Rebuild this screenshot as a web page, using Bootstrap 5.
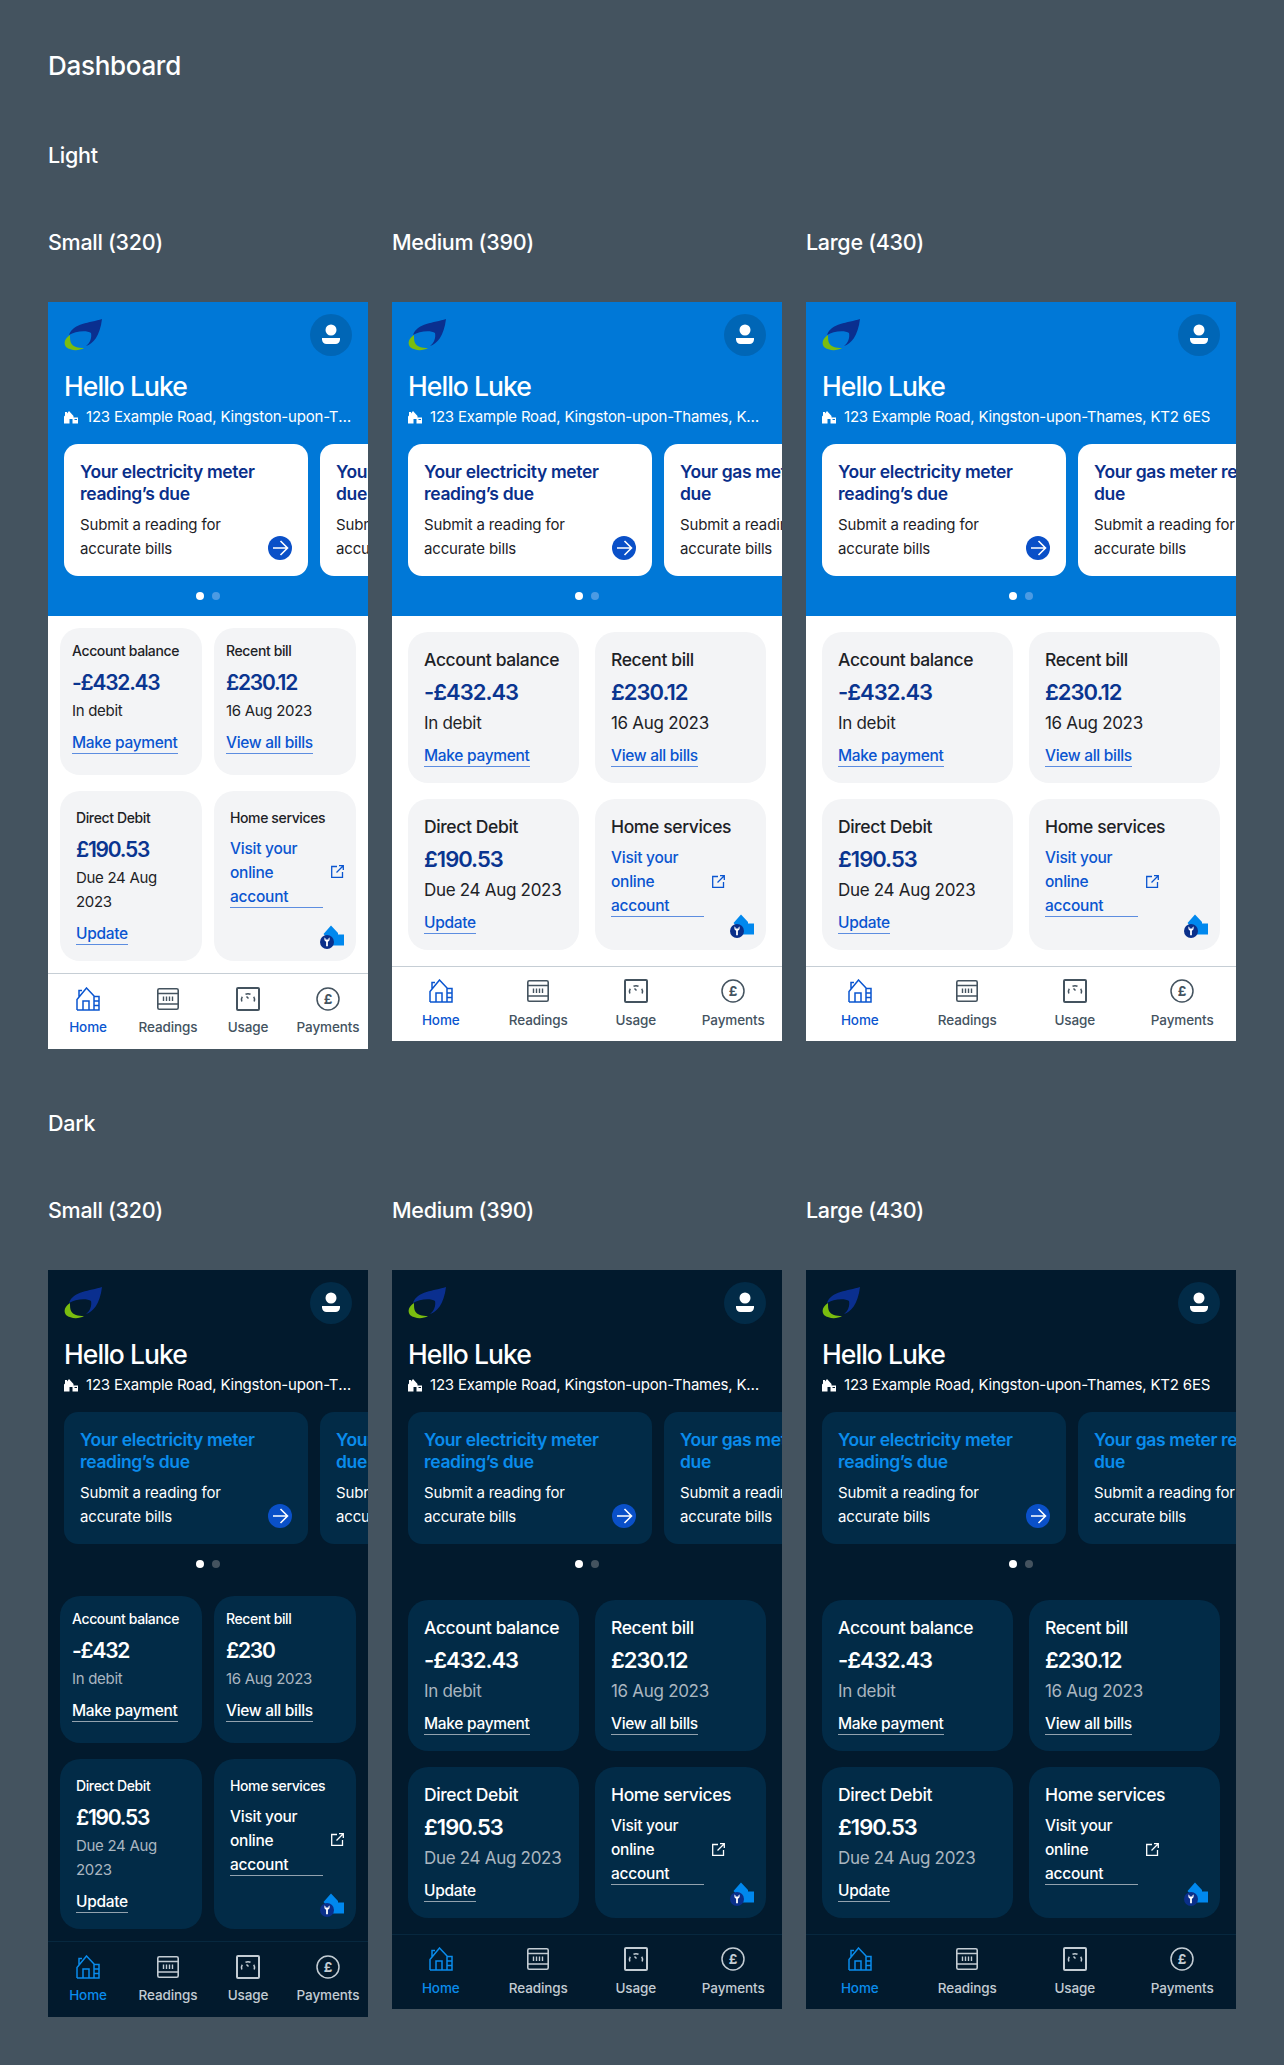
<!DOCTYPE html>
<html lang="en">
<head>
<meta charset="UTF-8">
<title>Dashboard</title>
<link href="https://cdn.jsdelivr.net/npm/bootstrap@5.3.0/dist/css/bootstrap.min.css" rel="stylesheet">
<style>
body { background: #44535f; font-family: Inter, "Liberation Sans", sans-serif; color: #fff; }
.board { padding: 50px 48px 48px; width: 1284px; }
.board-title { font-size: 26px; line-height: 32px; font-weight: 500; letter-spacing: -.3px; margin: 0; }
.board-mode { font-size: 21.5px; line-height: 28px; font-weight: 500; letter-spacing: -.3px; margin: 59px 0 0; }
.board-mode.later { margin-top: 60px; }
.phones { margin-top: 61px; }
.size-label { font-size: 21.5px; line-height: 24px; font-weight: 500; letter-spacing: -.3px; margin-bottom: 48px; }

.phone { --head: #0078d7; --avatar: #0066b6; --page: #fff; --promo: #fff; --promo-title: #0a2f8a; --promo-text: #1d2226;
  --tile: #f3f4f6; --tile-title: #1d2226; --amount: #0a3590; --tile-text: #1d2226; --link: #0a55d0; --rule: #5c8de0;
  --nav-line: #c6ced5; --nav: #44535f; --nav-on: #0a55d0; --dot: #4c9be3; --house: #0088ee; --badge: #0a2f8a;
  --ph-title: 17.5px; --ph-num: 22px; --ph-num-ls: -1px; --ph-text: 17px; --ph-pad: 16px; --ph-gap: 16px; --ph-nav: 12px; --ph-nav-gap: 8px; --ph-nav-end: 12px;
  background: var(--page); color: var(--tile-text); flex: none; overflow: hidden; }
.theme-dark { --head: #021a2d; --avatar: #022b47; --page: #021a2d; --promo: #022b47; --promo-title: #0a8cec; --promo-text: #fff;
  --tile: #022b47; --tile-title: #fff; --amount: #fff; --tile-text: #aab6c0; --link: #fff; --rule: #93a2ae;
  --nav-line: #07283f; --nav: #c3ccd3; --nav-on: #0a8cec; --dot: #44535f; }
.phone-s { width: 320px; --ph-title: 14px; --ph-num: 21px; --ph-num-ls: -1.25px; --ph-text: 15px; --ph-pad: 12px; --ph-gap: 12px; --ph-nav: 13px; --ph-nav-gap: 7px; --ph-nav-end: 13px; }
.phone-m { width: 390px; }
.phone-l { width: 430px; }

.ph-head { background: var(--head); padding: 12px 0 16px; color: #fff; }
.ph-top { padding: 0 16px; }
.ph-avatar { width: 42px; height: 42px; background: var(--avatar); }
.ph-hello { font-size: 26.5px; line-height: 34px; font-weight: 500; letter-spacing: -.95px; margin: 13px 16px 0; }
.ph-address { font-size: 15px; line-height: 22px; margin: 3px 16px 0; letter-spacing: -.2px; }
.ph-address svg { flex: none; margin-right: 8px; }
.ph-track { margin: 16px 0 0 16px; gap: 12px; }
.promo { flex: 0 0 244px; height: 132px; background: var(--promo); border-radius: 14px; padding: 17px 16px 15px; }
.promo-title { font-size: 17.5px; line-height: 22px; font-weight: 600; letter-spacing: -.35px; color: var(--promo-title); white-space: nowrap; }
.promo-text { font-size: 15px; line-height: 24px; margin-top: 8px; color: var(--promo-text); white-space: nowrap; letter-spacing: -.15px; }
.promo-go { right: 16px; bottom: 16px; width: 24px; height: 24px; background: #0a50c8; }
.ph-dots { margin-top: 16px; }
.ph-dot { width: 8px; height: 8px; background: var(--dot); }
.ph-dot.on { background: #fff; }

.ph-tiles { padding: var(--ph-pad); padding-bottom: var(--ph-gap); grid-template-columns: minmax(0, 1fr) minmax(0, 1fr); column-gap: var(--ph-gap); row-gap: 16px; }
.tile { background: var(--tile); border-radius: 20px; padding: 16px; }
.tile-name { font-size: var(--ph-title); line-height: 24px; font-weight: 500; letter-spacing: -.38px; color: var(--tile-title); }
.tile-amount { font-size: var(--ph-num); line-height: 28px; font-weight: 600; letter-spacing: var(--ph-num-ls); color: var(--amount); margin-top: 6px; }
.tile-note { font-size: var(--ph-text); line-height: 24px; color: var(--tile-text); margin-top: 5px; letter-spacing: -.3px; }
.tile-link { display: inline-block; height: 23px; font-size: 15.5px; line-height: 24px; font-weight: 500; letter-spacing: -.3px; color: var(--link);
  text-decoration: none; border-bottom: 1px solid var(--rule); margin-top: 9px; vertical-align: top; }
.tile-visit { flex: none; width: 93px; height: 71px; font-size: 15.5px; line-height: 24px; font-weight: 500; letter-spacing: -.25px; color: var(--link);
  text-decoration: none; border-bottom: 1px solid var(--rule); margin-top: 7px; }
.tile-out { flex: none; width: 13px; height: 13px; margin-left: 8px; color: var(--link); margin-top: 36px; }
.tile-house { right: 12px; bottom: 12px; width: 24px; height: 24px; }
.phone-s .tile-name { line-height: 22px; }
.phone-s .tile-amount { margin-top: 7px; }
.phone-s .tile-note { margin-top: 2px; }
.phone-s .tile-link { margin-top: 8px; }
.phone-s .tile-first { padding: 12px 12px 21px; }
.phone-s .tile-visit { margin-top: 8px; }

.ph-nav { border-top: 1px solid var(--nav-line); padding-top: var(--ph-nav); padding-bottom: var(--ph-nav-end); }
.ph-nav-item { flex: 1 1 0; color: var(--nav); font-size: 13.5px; line-height: 18px; font-weight: 500; letter-spacing: -.1px; text-decoration: none; }
.ph-nav-item svg { width: 24px; height: 24px; margin-bottom: var(--ph-nav-gap); }
.ph-nav-item.on { color: var(--nav-on); }
.ph-nav-item text { font-family: Inter, "Liberation Sans", sans-serif; }
.logo-leaf { width: 40px; height: 34px; margin-top: 4px; }
.house-wall { fill: var(--house); }
.house-badge { fill: var(--badge); }
</style>
</head>
<body>

<svg class="d-none">
  <symbol id="i-logo" viewBox="0 0 40 34">
    <path fill="#0a2f8f" d="M38 1C26 5 9 5 5 17c6-4 18-5 22-2 1 5-1 10-5 13 7-2 14-10 16-27z"/>
    <path fill="#7abd0f" d="M6 17c-5 3-7 8-4 12 5 4 13 4 18 1-6 0-11-1-13-5-1-2-1-5-1-8z"/>
  </symbol>
  <symbol id="i-person" viewBox="0 0 24 24">
    <circle cx="12" cy="7" r="5.500" fill="#fff"/>
    <path fill="#fff" d="M3 15h18v1.500c0 2.500-2 4.500-4.500 4.500h-9C5 21 3 19 3 16.500z"/>
  </symbol>
  <symbol id="i-addr" viewBox="0 0 14 14">
    <path fill="#fff" d="M0 13.500V6.500L1 5.500V2h2v1.500L5 1l4.500 5v1.500H14v6H8.500V9h-3v4.500zM10.500 9v1H13V9z"/>
  </symbol>
  <symbol id="i-arrow" viewBox="0 0 24 24">
    <path fill="none" stroke="#fff" stroke-width="1.600" d="M5 12h14M12.500 5l7 7-7 7"/>
  </symbol>
  <symbol id="i-out" viewBox="0 0 13 13">
    <path fill="none" stroke="currentColor" stroke-width="1.300" d="M6 1.500H.7v10.800h10.800V7M5.500 7.500 12 1M8 .7h4.300V5"/>
  </symbol>
  <symbol id="i-house" viewBox="0 0 24 24">
    <path class="house-wall" d="M3.500 9 11 .5 18 8v1.500h6v11H9V15z"/>
    <circle class="house-badge" cx="7" cy="17" r="7"/>
    <path fill="#fff" d="M4.400 12.400v2.100c0 1 .7 1.900 1.700 2.200v4.500h1.800v-4.500c1-.3 1.700-1.200 1.700-2.200v-2.100l-1.100.8v1.300H5.500v-1.300z"/>
  </symbol>
  <symbol id="i-home" viewBox="0 0 24 24">
    <g fill="none" stroke="currentColor" stroke-width="1.500">
      <path d="M1 23V12.500L10.500 1l8 8.500M3 10V3.500h3M18 9.500h5V23H1M18 9.500V23M7 23v-9h6v9M18 14h5M18 18.500h5"/>
    </g>
  </symbol>
  <symbol id="i-readings" viewBox="0 0 24 24">
    <g fill="none" stroke="currentColor">
      <rect x="1.800" y="1.800" width="20.400" height="20.400" rx="1.500" stroke-width="1.600"/>
      <path stroke-width="1.400" d="M2 6.500h20M2 17h20"/>
      <path stroke-width="1.400" d="M7.500 9.500v4.500M10.500 9.500v4.500M13.500 9.500v4.500M16.500 9.500v4.500"/>
    </g>
  </symbol>
  <symbol id="i-usage" viewBox="0 0 24 24">
    <g fill="none" stroke="currentColor">
      <rect x="1" y="1" width="22" height="22" rx="1" stroke-width="2"/>
      <path stroke-width="1.500" d="M5.800 14.500c-.6-1.800-.4-3.400.5-4.700M9.500 7.200c1.600-.6 3.400-.6 5 0M17.700 9.800c.9 1.300 1.100 2.900.5 4.700M10.500 9.500 12.500 11.500"/>
    </g>
  </symbol>
  <symbol id="i-pay" viewBox="0 0 24 24">
    <circle cx="12" cy="12" r="11" fill="none" stroke="currentColor" stroke-width="1.500"/>
    <text x="12" y="16.800" text-anchor="middle" font-size="13.500" font-weight="700" fill="currentColor">£</text>
  </symbol>
</svg>

<div class="board">
  <h1 class="board-title">Dashboard</h1>
  <h2 class="board-mode">Light</h2>
  <div class="phones d-flex gap-4 align-items-start" id="light"></div>
  <h2 class="board-mode later">Dark</h2>
  <div class="phones d-flex gap-4 align-items-start" id="dark"></div>
</div>

<script>
const sizes = [
    { cls: "phone-s", label: "Small (320)" },
    { cls: "phone-m", label: "Medium (390)" },
    { cls: "phone-l", label: "Large (430)" }
];

function icon(name, cls) {
    return `<svg class="${cls || ""}" width="24" height="24"><use href="#${name}"/></svg>`;
}

function promo(title, more) {
    return `
        <div class="promo position-relative">
            <div class="promo-title">${title}</div>
            <div class="promo-text">Submit a reading for<br>accurate bills</div>
            ${more ? `<span class="promo-go position-absolute rounded-circle d-flex align-items-center justify-content-center">${icon("i-arrow")}</span>` : ""}
        </div>`;
}

function phone(size, dark) {
    // the dark small phone really does cut the pence off in the design
    const shortFigures = dark && size.cls === "phone-s";
    const balance = shortFigures ? "-£432" : "-£432.43";
    const bill = shortFigures ? "£230" : "£230.12";
    const navItems = [["Home", "i-home"], ["Readings", "i-readings"], ["Usage", "i-usage"], ["Payments", "i-pay"]];

    return `
    <div>
        <div class="size-label">${size.label}</div>
        <div class="phone ${size.cls} ${dark ? "theme-dark" : ""}">
            <div class="ph-head">
                <div class="ph-top d-flex justify-content-between align-items-start">
                    ${icon("i-logo", "logo-leaf")}
                    <span class="ph-avatar rounded-circle d-flex align-items-center justify-content-center">${icon("i-person")}</span>
                </div>
                <div class="ph-hello">Hello Luke</div>
                <div class="ph-address d-flex align-items-center">
                    <svg width="14" height="14"><use href="#i-addr"/></svg>
                    <span class="text-truncate">123 Example Road, Kingston-upon-Thames, KT2 6ES</span>
                </div>
                <div class="ph-track d-flex overflow-hidden">
                    ${promo("Your electricity meter<br>reading’s due", true)}
                    ${promo("Your gas meter reading’s<br>due", true)}
                </div>
                <div class="ph-dots d-flex justify-content-center gap-2">
                    <span class="ph-dot on rounded-circle"></span>
                    <span class="ph-dot rounded-circle"></span>
                </div>
            </div>
            <div class="ph-tiles d-grid">
                <div class="tile tile-first">
                    <div class="tile-name">Account balance</div>
                    <div class="tile-amount">${balance}</div>
                    <div class="tile-note">In debit</div>
                    <a class="tile-link" href="#">Make payment</a>
                </div>
                <div class="tile tile-first">
                    <div class="tile-name">Recent bill</div>
                    <div class="tile-amount">${bill}</div>
                    <div class="tile-note">16 Aug 2023</div>
                    <a class="tile-link" href="#">View all bills</a>
                </div>
                <div class="tile">
                    <div class="tile-name">Direct Debit</div>
                    <div class="tile-amount">£190.53</div>
                    <div class="tile-note">Due 24 Aug 2023</div>
                    <a class="tile-link" href="#">Update</a>
                </div>
                <div class="tile position-relative">
                    <div class="tile-name">Home services</div>
                    <div class="d-flex align-items-start">
                        <a class="tile-visit d-block" href="#">Visit your online account</a>
                        <svg class="tile-out"><use href="#i-out"/></svg>
                    </div>
                    ${icon("i-house", "tile-house position-absolute")}
                </div>
            </div>
            <div class="ph-nav d-flex">
                ${navItems.map((item, i) => `
                <a class="ph-nav-item d-flex flex-column align-items-center ${i === 0 ? "on" : ""}" href="#">
                    ${icon(item[1])}<span>${item[0]}</span>
                </a>`).join("")}
            </div>
        </div>
    </div>`;
}

document.getElementById("light").innerHTML = sizes.map(s => phone(s, false)).join("");
document.getElementById("dark").innerHTML = sizes.map(s => phone(s, true)).join("");
</script>

<script src="https://cdn.jsdelivr.net/npm/bootstrap@5.3.0/dist/js/bootstrap.bundle.min.js"></script>
</body>
</html>
